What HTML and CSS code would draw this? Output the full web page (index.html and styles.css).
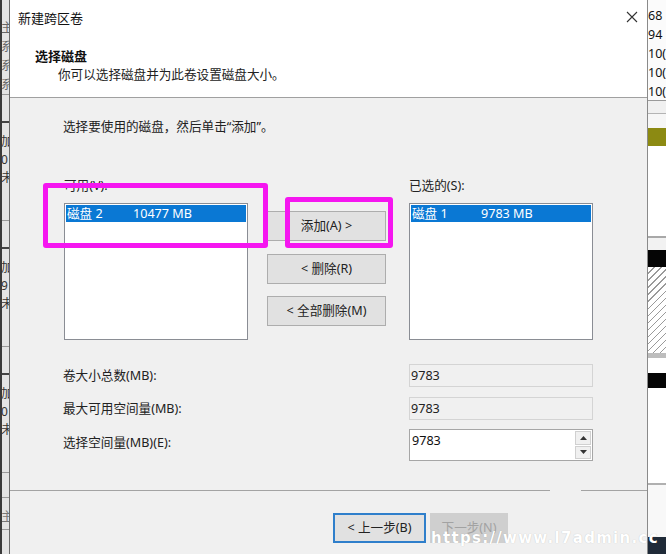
FILE: index.html
```html
<!DOCTYPE html>
<html lang="zh-CN">
<head>
<meta charset="utf-8">
<title>新建跨区卷</title>
<link rel="stylesheet" href="styles.css">
</head>
<body>
<div class="screen">
  <div class="bg-left">
    <div class="seg seg-top"><span>主</span><span>系</span><span>系</span><span>系</span></div>
    <div class="seg"><i class="tick"></i><span>加</span><span>0</span><span>未</span></div>
    <div class="seg"><i class="tick"></i><span>加</span><span>9</span><span>未</span></div>
    <div class="seg"><i class="tick"></i><span>加</span><span>0</span><span>未</span></div>
    <div class="seg seg-foot"><span>主</span></div>
    <div class="seg-dark"></div>
  </div>

  <div class="dialog">
    <div class="header">
      <div class="titlebar">
        <span class="title">新建跨区卷</span>
        <svg class="close" width="12" height="12" viewBox="0 0 12 12"><path d="M1 1 L11 11 M11 1 L1 11" stroke="#333" stroke-width="1.1" fill="none"/></svg>
      </div>
      <div class="heading">选择磁盘</div>
      <div class="subtitle">你可以选择磁盘并为此卷设置磁盘大小。</div>
    </div>

    <div class="body">
      <div class="instruction">选择要使用的磁盘，然后单击“添加”。</div>

      <div class="picker">
        <div class="col">
          <div class="label">可用(V):</div>
          <div class="listbox">
            <div class="item sel"><span class="c1">磁盘 2</span><span>10477 MB</span></div>
          </div>
        </div>
        <div class="btncol">
          <div class="btn">添加(A) &gt;</div>
          <div class="btn">&lt; 删除(R)</div>
          <div class="btn">&lt; 全部删除(M)</div>
        </div>
        <div class="col">
          <div class="label">已选的(S):</div>
          <div class="listbox">
            <div class="item sel"><span class="c1 c1r">磁盘 1</span><span>9783 MB</span></div>
          </div>
        </div>
      </div>

      <div class="fields">
        <div class="flabel">卷大小总数(MB):</div>
        <div class="ro">9783</div>
        <div class="flabel">最大可用空间量(MB):</div>
        <div class="ro ro2">9783</div>
        <div class="flabel flabel3">选择空间量(MB)(E):</div>
        <div class="spin">
          <span class="spin-val">9783</span>
          <div class="spin-btns">
            <div class="sb"><svg width="7" height="4" viewBox="0 0 7 4"><path d="M0 4 L3.5 0 L7 4 Z" fill="#333"/></svg></div>
            <div class="sb"><svg width="7" height="4" viewBox="0 0 7 4"><path d="M0 0 L3.5 4 L7 0 Z" fill="#333"/></svg></div>
          </div>
        </div>
      </div>
    </div>

    <div class="sep"></div>
    <div class="footer">
      <div class="fbtn back">&lt; 上一步(B)</div>
      <div class="fbtn disabled">下一步(N)</div>
    </div>
  </div>

  <div class="bg-right">
    <div class="nums"><span>68</span><span>94</span><span>10(</span><span>10(</span><span>10(</span></div>
    <div class="r r-line"></div>
    <div class="r r-a"></div>
    <div class="r r-line2"></div>
    <div class="r r-b"></div>
    <div class="r r-olive"></div>
    <div class="r r-white1"></div>
    <div class="r r-line3"></div>
    <div class="r r-c"></div>
    <div class="r r-black"></div>
    <div class="r r-hatch"></div>
    <div class="r r-gray"></div>
    <div class="r r-white2"></div>
    <div class="r r-black2"></div>
    <div class="r r-white3"></div>
    <div class="r r-line4"></div>
    <div class="r r-white4"></div>
    <div class="r r-dark"></div>
  </div>

  <div class="mark mark1"></div>
  <div class="mark mark2"></div>
  <div class="watermark">https://www.l7admin.cc</div>
</div>
</body>
</html>
```

FILE: styles.css
```css
* { box-sizing: border-box; }

html, body {
  margin: 0;
  padding: 0;
}

body {
  width: 666px;
  height: 554px;
  overflow: hidden;
  font-family: "Noto Sans", "Noto Sans CJK SC", sans-serif;
  font-size: 12.6px;
  color: #1a1a1a;
  background: #f0f0f0;
}

.screen {
  position: relative;
  display: flex;
  width: 666px;
  height: 554px;
}

/* ---------- background app, left edge ---------- */
.bg-left {
  width: 9px;
  height: 554px;
  overflow: hidden;
  background: #e4e4e4;
  border-left: 2px solid #3a3a3a;
  display: flex;
  flex-direction: column;
  font-size: 12px;
  color: #333;
}
.seg {
  display: flex;
  flex-direction: column;
  height: 131px;
  padding-top: 38px;
  line-height: 18px;
  border-bottom: 1px solid #9a9a9a;
  white-space: nowrap;
  text-indent: -1px;
}
.seg-top {
  height: 98px;
  padding-top: 18px;
  line-height: 19px;
  color: #666;
}
.seg .tick {
  display: block;
  width: 7px;
  height: 2px;
  background: #444;
  margin-top: -12px;
  margin-bottom: 10px;
}
.seg-foot {
  height: 34px;
  padding-top: 10px;
  color: #777;
  border-top: 1px solid #9a9a9a;
  margin-top: 24px;
}
.seg-dark {
  flex: 1;
  margin-top: 24px;
  background: #1f2a38;
}

/* ---------- dialog ---------- */
.dialog {
  width: 639px;
  height: 554px;
  border-left: 1px solid #6a6a6a;
  border-right: 1px solid #8a8a8a;
  background: #f0f0f0;
  display: flex;
  flex-direction: column;
}

.header {
  height: 98px;
  background: #fff;
  border-bottom: 1px solid #a0a0a0;
}
.titlebar {
  height: 34px;
  display: flex;
  align-items: center;
  justify-content: space-between;
  padding: 0 9px 0 8px;
}
.title {
  font-size: 13px;
  color: #111;
}
.close {
  margin-top: -1px;
}
.heading {
  margin-top: 13px;
  padding-left: 25px;
  height: 19px;
  line-height: 19px;
  font-size: 13px;
  font-weight: bold;
  color: #111;
}
.subtitle {
  padding-left: 48px;
  line-height: 18px;
  color: #222;
}

.body {
  padding-top: 20px;
}
.instruction {
  padding-left: 53px;
  line-height: 18px;
  color: #222;
}

.picker {
  display: flex;
  margin-top: 41px;
  padding-left: 54px;
}
.col {
  width: 184px;
}
.col:last-child {
  margin-left: 23px;
}
.label {
  line-height: 18px;
  color: #222;
}
.listbox {
  margin-top: 8px;
  height: 137px;
  background: #fff;
  border: 1px solid #8a8d94;
  padding: 1px;
}
.item {
  display: flex;
  height: 17px;
  line-height: 17px;
  padding-left: 1px;
  white-space: nowrap;
}
.item.sel {
  background: #0a78d4;
  color: #fff;
}
.c1 {
  width: 66px;
}
.c1r {
  width: 69px;
}

.btncol {
  width: 119px;
  margin-left: 19px;
  padding-top: 34px;
  display: flex;
  flex-direction: column;
  gap: 12.5px;
}
.btn {
  height: 30px;
  line-height: 28px;
  text-align: center;
  background: #e1e1e1;
  border: 1px solid #adadad;
  color: #222;
}

.fields {
  display: grid;
  grid-template-columns: 346px 184px;
  grid-template-rows: 23px 23px 32px;
  row-gap: 10px;
  margin-top: 24px;
  padding-left: 53px;
  align-items: center;
}
.flabel {
  line-height: 18px;
  color: #222;
}
.flabel3 {
  align-self: start;
  padding-top: 4px;
}
.ro {
  height: 23px;
  line-height: 21px;
  padding-left: 1px;
  background: #f0f0f0;
  border: 1px solid #d4d4d4;
  color: #222;
}
.spin {
  margin-top: -2px;
  height: 32px;
  display: flex;
  background: #fff;
  border: 1px solid #a6a6a6;
}
.spin-val {
  flex: 1;
  padding-left: 2px;
  line-height: 22px;
  color: #111;
}
.spin-btns {
  width: 17px;
  padding: 1px 1px 1px 0;
  display: flex;
  flex-direction: column;
  gap: 1px;
}
.sb {
  flex: 1;
  display: flex;
  align-items: center;
  justify-content: center;
  background: #f0f0f0;
  border: 1px solid #d0d0d0;
}

.sep {
  margin-top: 28px;
  height: 1px;
  background: linear-gradient(to right, #a3a3a3 0 540px, transparent 540px 571px, #a3a3a3 571px);
}

.footer {
  display: flex;
  gap: 4px;
  padding-top: 22px;
  padding-left: 323px;
}
.fbtn {
  height: 30px;
  line-height: 26px;
  text-align: center;
  color: #222;
}
.back {
  width: 93px;
  background: #e1e1e1;
  border: 2px solid #2f7fcb;
}
.disabled {
  width: 78px;
  background: #cfcfcf;
  color: #a2a2a2;
  line-height: 30px;
}

/* ---------- background app, right edge ---------- */
.bg-right {
  width: 18px;
  height: 554px;
  overflow: hidden;
  display: flex;
  flex-direction: column;
  background: #fff;
}
.nums {
  height: 100px;
  padding-top: 6px;
  display: flex;
  flex-direction: column;
  line-height: 19px;
  font-size: 12.5px;
  color: #111;
  white-space: nowrap;
  background: #fbfbfb;
}
.r { flex: none; }
.r-line { height: 1px; background: #9a9a9a; }
.r-a { height: 12px; background: #f0f0f0; }
.r-line2 { height: 1px; background: #b4b4b4; }
.r-b { height: 14px; background: #f6f6f6; }
.r-olive { height: 18px; background: #8c8a12; }
.r-white1 { height: 90px; background: #fff; }
.r-line3 { height: 2px; background: #a8a8a8; }
.r-c { height: 12px; background: #f2f2f2; }
.r-black { height: 17px; background: #050505; }
.r-hatch {
  height: 86px;
  background: repeating-linear-gradient(135deg, #ffffff 0 4px, #9a9a9a 4px 5px);
}
.r-gray { height: 5px; background: #bdbdbd; }
.r-white2 { height: 15px; background: #fff; }
.r-black2 { height: 15px; background: #050505; }
.r-white3 { height: 95px; background: #fff; }
.r-line4 { height: 2px; background: #b0b0b0; }
.r-white4 { height: 52px; background: #f8f8f8; }
.r-dark { flex: 1; background: #1f2a38; }

/* ---------- annotations ---------- */
.mark {
  position: absolute;
  border: 5px solid #f516f0;
  border-radius: 3px;
}
.mark1 {
  left: 43px;
  top: 183px;
  width: 225px;
  height: 65px;
}
.mark2 {
  left: 285px;
  top: 197px;
  width: 108px;
  height: 51px;
}

.watermark {
  position: absolute;
  left: 431px;
  top: 529px;
  font-family: "DejaVu Sans", sans-serif;
  font-weight: bold;
  font-size: 15px;
  letter-spacing: 1.3px;
  color: #ffffff;
  text-shadow: 0 0 1px rgba(0, 0, 0, 0.22);
  white-space: nowrap;
}
```
